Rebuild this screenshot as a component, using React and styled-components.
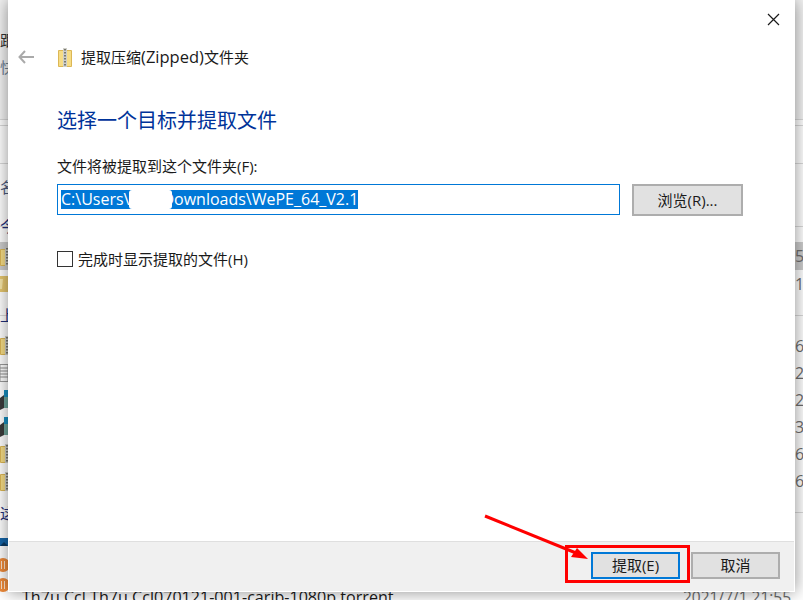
import styled, { createGlobalStyle } from 'styled-components';

const Global = createGlobalStyle`
    html, body {
        margin: 0;
        padding: 0;
        background: #fff;
    }
    * {
        box-sizing: border-box;
    }
`;

const uiFont = `"Open Sans", "Noto Sans CJK SC", sans-serif`;

const Desktop = styled.div`
    position: relative;
    width: 803px;
    height: 600px;
    overflow: hidden;
    background: #fff;
    font-family: ${uiFont};
`;

/* the explorer window behind the dialog */
const Explorer = styled.div`
    display: flex;
    flex-direction: column;
    width: 803px;
`;

const Row = styled.div`
    flex: none;
    display: flex;
    align-items: center;
    justify-content: space-between;
    height: ${(p) => p.$h}px;
    background: ${(p) => (p.$selected ? '#cdcdcd' : 'transparent')};
    border-bottom: ${(p) => (p.$line ? '1px solid #d9d9d9' : 'none')};
`;

const GroupRow = styled(Row)`
    background: linear-gradient(#d9d9d9, #d9d9d9) center / 100% 1px no-repeat;
`;

const RibbonRow = styled(Row)`
    display: block;
    padding-top: 31px;
    background: #f3f3f3;
`;

const LeftText = styled.div`
    width: 8px;
    overflow: hidden;
    font-size: 15px;
    line-height: 18px;
    white-space: nowrap;
    color: ${(p) => p.$color || '#1f2f7a'};
    margin-bottom: ${(p) => p.$gap || 0}px;
`;

const Digit = styled.div`
    width: 8px;
    overflow: hidden;
    font-size: 16px;
    line-height: 20px;
    color: #6d6d6d;
`;

const LastRow = styled(Row)`
    align-items: flex-start;
`;

const LastIcon = styled.div`
    width: 22px;
    flex: none;
`;

const FileName = styled.div`
    flex: 1;
    padding-top: 10px;
    font-size: 16.1px;
    line-height: 20px;
    color: #1a1a1a;
    white-space: nowrap;
`;

const FileDate = styled.div`
    width: 120px;
    padding-top: 10px;
    font-size: 15.5px;
    line-height: 20px;
    color: #6d6d6d;
    white-space: nowrap;
`;

/* the dialog */
const Dialog = styled.div`
    position: absolute;
    left: 8px;
    top: 0;
    width: 787px;
    height: 592px;
    display: flex;
    flex-direction: column;
    background: #fff;
    box-shadow: 0 0 16px rgba(0, 0, 0, 0.45);
`;

const CloseButton = styled.button`
    position: absolute;
    top: 13px;
    right: 15px;
    width: 13px;
    height: 13px;
    padding: 0;
    border: none;
    background: none;
    display: flex;
`;

const Header = styled.div`
    display: flex;
    align-items: center;
    height: 38px;
    margin-top: 38px;
    padding-left: 10px;
`;

const BackArrow = styled.svg`
    width: 16px;
    height: 14px;
    margin-right: 24px;
`;

const HeaderTitle = styled.div`
    margin-left: 9px;
    font-size: 15px;
    line-height: 20px;
    color: #1a1a1a;
`;

const Latin = styled.span`
    font-size: 16.5px;
`;

const Content = styled.div`
    flex: 1;
    display: flex;
    flex-direction: column;
    padding: 30px 0 0 49px;
`;

const Heading = styled.h1`
    margin: 0;
    font-size: 20px;
    font-weight: 400;
    line-height: 30px;
    color: #003399;
`;

const FieldLabel = styled.div`
    margin-top: 20px;
    font-size: 15px;
    line-height: 20px;
    color: #1a1a1a;
`;

const PathRow = styled.div`
    display: flex;
    align-items: flex-start;
    margin-top: 8px;
`;

const PathBox = styled.div`
    width: 563px;
    height: 31px;
    padding: 5px 3px;
    border: 1px solid #0078d7;
    font-size: 16px;
    line-height: 19px;
    white-space: nowrap;
`;

const Selected = styled.span`
    display: inline-block;
    height: 19px;
    background: #0078d7;
    color: #fff;
`;

const Redacted = styled.span`
    position: relative;
    display: inline-block;
    width: 43px;
    height: 19px;
    margin-right: -10px;
    vertical-align: top;
    background: #fff;
    border-radius: 3px;
`;

const Button = styled.button`
    width: ${(p) => p.$w}px;
    height: ${(p) => p.$h}px;
    padding: 0 0 2px;
    border: 2px solid ${(p) => (p.$primary ? '#0078d7' : '#adadad')};
    background: #e1e1e1;
    font-family: ${uiFont};
    font-size: 15px;
    color: #1a1a1a;
`;

const BrowseButton = styled(Button)`
    margin-left: 12px;
`;

const CheckRow = styled.label`
    display: flex;
    align-items: center;
    margin-top: 33px;
    font-size: 15px;
    line-height: 20px;
    color: #1a1a1a;
`;

const CheckBox = styled.span`
    width: 16px;
    height: 16px;
    margin-right: 5px;
    border: 1px solid #333;
    background: #fff;
`;

const Footer = styled.div`
    display: flex;
    justify-content: flex-end;
    gap: 11px;
    height: 50px;
    margin: 0 1px 1px;
    padding: 10px 14px 0 0;
    background: #f0f0f0;
    border-top: 1px solid #dfdfdf;
`;

/* red annotation drawn on the screenshot */
const RedBox = styled.div`
    position: absolute;
    left: 565px;
    top: 545px;
    width: 125px;
    height: 38px;
    border: 3px solid #f00;
`;

const ArrowOverlay = styled.svg`
    position: absolute;
    left: 480px;
    top: 510px;
    width: 115px;
    height: 55px;
`;

const ZipIcon = ({ h = 19 }) => (
    <svg width="14" height={h} viewBox="0 0 14 19" style={{ flex: 'none', display: 'block' }}>
        <path d="M.5 2.5h13v16H.5z" fill="#f6dc85" stroke="#dcb755" />
        <path d="M5 0h4v19H5z" fill="#cfcfc8" />
        <path d="M6 1h2v1.5H6zM6 4h2v1.5H6zM6 7h2v1.5H6zM6 10h2v1.5H6zM6 13h2v1.5H6zM6 16h2v1.5H6z" fill="#77776f" />
    </svg>
);

const FolderEdge = () => (
    <svg width="8" height="16" viewBox="0 0 8 16" style={{ flex: 'none', display: 'block' }}>
        <path d="M0 0h8v16H0z" fill="#e6c76f" />
        <path d="M0 3h3l-1 10H0z" fill="#f7e6a8" />
    </svg>
);

const DocEdge = () => (
    <svg width="8" height="18" viewBox="0 0 8 18" style={{ flex: 'none', display: 'block' }}>
        <path d="M0 .5h8v17H0z" fill="#fff" stroke="#9a9a9a" />
        <path d="M0 4h8M0 7h8M0 10h8M0 13h8" stroke="#8f8f8f" />
    </svg>
);

const AppEdge = () => (
    <svg width="8" height="20" viewBox="0 0 8 20" style={{ flex: 'none', display: 'block' }}>
        <path d="M4 0h4v9H4z" fill="#178fc0" />
        <path d="M0 8l4-3v13l-4 2z" fill="#3b3b3b" />
        <path d="M4 7h4v11H4z" fill="#6fa69b" />
    </svg>
);

const PhotoEdge = () => (
    <svg width="8" height="8" viewBox="0 0 8 8" style={{ flex: 'none', display: 'block' }}>
        <path d="M0 0h8v8H0z" fill="#1565a8" />
        <path d="M0 8l4-4 4 4z" fill="#0c3a63" />
    </svg>
);

const OrangeEdge = () => (
    <svg width="8" height="16" viewBox="0 0 8 16" style={{ flex: 'none', display: 'block' }}>
        <circle cx="3" cy="8" r="7" fill="#ef8b3a" />
        <path d="M1.5 4v8M4.5 4v8" stroke="#fbe3cc" />
    </svg>
);

const fileRows = [
    { h: 28, icon: <ZipIcon />, digit: '5', selected: true },
    { h: 28, icon: <FolderEdge />, digit: '1' },
];

const olderRows = [
    { h: 27, icon: <ZipIcon />, digit: '6' },
    { h: 27, icon: <DocEdge />, digit: '2' },
    { h: 27, icon: <AppEdge />, digit: '2' },
    { h: 27, icon: <AppEdge />, digit: '3' },
    { h: 27, icon: <ZipIcon />, digit: '6' },
    { h: 28, icon: <ZipIcon />, digit: '6' },
];

const FileRow = ({ row }) => (
    <Row $h={row.h} $selected={row.selected}>
        {row.icon}
        <Digit>{row.digit}</Digit>
    </Row>
);

const App = () => {
    return (
        <Desktop>
            <Global />
            <Explorer>
                <RibbonRow $h={120} $line>
                    <LeftText $color="#333" $gap={9}>跟</LeftText>
                    <LeftText $color="#6d8296">快</LeftText>
                </RibbonRow>
                <Row $h={6} $line />
                <Row $h={38} $line />
                <Row $h={46}>
                    <LeftText $color="#4c5a7d">名</LeftText>
                </Row>
                <GroupRow $h={32}>
                    <LeftText>今</LeftText>
                </GroupRow>
                {fileRows.map((row, i) => (
                    <FileRow key={i} row={row} />
                ))}
                <GroupRow $h={34}>
                    <LeftText>上</LeftText>
                </GroupRow>
                {olderRows.map((row, i) => (
                    <FileRow key={i} row={row} />
                ))}
                <GroupRow $h={35}>
                    <LeftText>这</LeftText>
                </GroupRow>
                <Row $h={23}>
                    <PhotoEdge />
                </Row>
                <Row $h={24}>
                    <OrangeEdge />
                </Row>
                <LastRow $h={26}>
                    <LastIcon>
                        <OrangeEdge />
                    </LastIcon>
                    <FileName>Th7u Ccl Th7u Ccl070121-001-carib-1080p.torrent</FileName>
                    <FileDate>2021/7/1 21:55</FileDate>
                </LastRow>
            </Explorer>

            <Dialog>
                <CloseButton aria-label="关闭">
                    <svg width="13" height="13" viewBox="0 0 13 13">
                        <path d="M1 1l11 11M12 1L1 12" stroke="#1a1a1a" strokeWidth="1.2" fill="none" />
                    </svg>
                </CloseButton>
                <Header>
                    <BackArrow viewBox="0 0 16 14">
                        <path d="M7 1L1.5 7 7 13M1.5 7H16" stroke="#aaa" strokeWidth="2" fill="none" />
                    </BackArrow>
                    <ZipIcon />
                    <HeaderTitle>提取压缩<Latin>(Zipped)</Latin>文件夹</HeaderTitle>
                </Header>
                <Content>
                    <Heading>选择一个目标并提取文件</Heading>
                    <FieldLabel>文件将被提取到这个文件夹(F):</FieldLabel>
                    <PathRow>
                        <PathBox>
                            <Selected>
                                C:\Users\<Redacted />Downloads\WePE_64_V2.1
                            </Selected>
                        </PathBox>
                        <BrowseButton $w={111} $h={32}>浏览(R)...</BrowseButton>
                    </PathRow>
                    <CheckRow>
                        <CheckBox />
                        完成时显示提取的文件(H)
                    </CheckRow>
                </Content>
                <Footer>
                    <Button $primary $w={89} $h={27}>提取(E)</Button>
                    <Button $w={89} $h={27}>取消</Button>
                </Footer>
            </Dialog>

            <RedBox />
            <ArrowOverlay viewBox="0 0 115 55">
                <path d="M5 6L96 43" stroke="#f00" strokeWidth="3" fill="none" />
                <path d="M108 49L91 47L97 38z" fill="#f00" />
            </ArrowOverlay>
        </Desktop>
    );
};

export default App;
